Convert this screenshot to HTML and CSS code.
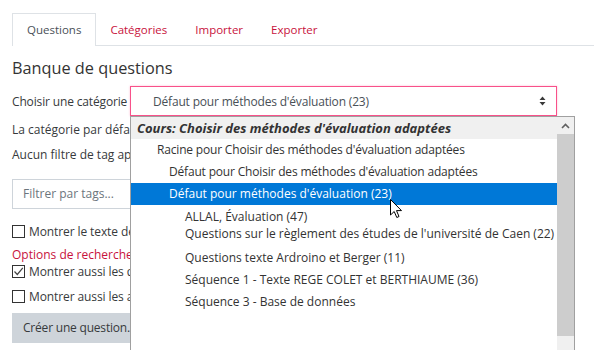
FILE: index.html
```html
<!DOCTYPE html>
<html lang="fr">
<head>
<meta charset="utf-8">
<title>Banque de questions</title>
<link rel="stylesheet" href="styles.css">
</head>
<body>
<div class="page">
  <ul class="tabs">
    <li class="tab active">Questions</li>
    <li class="tab">Catégories</li>
    <li class="tab">Importer</li>
    <li class="tab">Exporter</li>
  </ul>
  <h2 class="title">Banque de questions</h2>
  <div class="cat-row">
    <span class="label">Choisir une catégorie</span>
    <div class="select">
      <span class="sel-text">Défaut pour méthodes d'évaluation (23)</span>
      <svg class="sel-arrow" width="7" height="10" viewBox="0 0 7 10"><path d="M0.5 4 L3.5 0.5 L6.5 4 Z M0.5 6 L3.5 9.5 L6.5 6 Z" fill="#3a3a3a"/></svg>
    </div>
  </div>
  <div class="line l1">La catégorie par défaut pour les questions partagées dans ce contexte.</div>
  <div class="line l2">Aucun filtre de tag appliqué</div>
  <div class="tagfilter">Filtrer par tags...</div>
  <div class="check c1"><span class="box"></span>Montrer le texte de la question dans la liste de questions</div>
  <div class="opts">Options de recherche</div>
  <div class="check c2"><span class="box checked"><svg width="11" height="11" viewBox="0 0 11 11"><path d="M1.5 5.5 L4.3 8.5 L9.8 1.8" fill="none" stroke="#444" stroke-width="1.2"/></svg></span>Montrer aussi les questions des sous-catégories</div>
  <div class="check c3"><span class="box"></span>Montrer aussi les anciennes questions</div>
  <div class="btn">Créer une question...</div>

  <div class="dropdown">
    <div class="list">
      <div class="opt group">Cours: Choisir des méthodes d'évaluation adaptées</div>
      <div class="opt lv1 tight">Racine pour Choisir des méthodes d'évaluation adaptées</div>
      <div class="opt lv2 tight">Défaut pour Choisir des méthodes d'évaluation adaptées</div>
      <div class="opt lv2 selected">Défaut pour méthodes d'évaluation (23)</div>
      <div class="opt lv3 allal">ALLAL, Évaluation (47)</div>
      <div class="opt lv3 qsur">Questions sur le règlement des études de l'université de Caen (22)</div>
      <div class="opt lv3 qtexte">Questions texte Ardroino et Berger (11)</div>
      <div class="opt lv3">Séquence 1 - Texte REGE COLET et BERTHIAUME (36)</div>
      <div class="opt lv3">Séquence 3 - Base de données</div>
    </div>
    <div class="scrollbar">
      <div class="sb-up"><svg width="9" height="6" viewBox="0 0 9 6"><path d="M1 5 L4.5 1.5 L8 5" fill="none" stroke="#606060" stroke-width="1.6"/></svg></div>
      <div class="sb-thumb"></div>
      <div class="sb-track"></div>
    </div>
  </div>

  <svg class="cursor" width="13" height="20" viewBox="0 0 13 20"><path d="M0.5 0.5 L0.5 16 L4.2 12.5 L6.8 18.5 L9 17.5 L6.5 11.6 L11.5 11.6 Z" fill="#fff" stroke="#000" stroke-width="1" stroke-linejoin="round"/></svg>
</div>
</body>
</html>
```

FILE: styles.css
```css
html, body {
  margin: 0;
  padding: 0;
  background: #fff;
}
body {
  font-family: "Open Sans", "Noto Sans", sans-serif;
  font-size: 12px;
  color: #373a3c;
  width: 594px;
  height: 350px;
  overflow: hidden;
}
.page {
  position: relative;
  padding: 13px 0 0 12px;
  height: 337px;
  overflow: hidden;
}
.tabs {
  list-style: none;
  margin: 0;
  padding: 0;
  display: flex;
  border-bottom: 1px solid #dee2e6;
  height: 32px;
}
.tab {
  height: 32px;
  box-sizing: border-box;
  padding: 0 13px;
  border: 1px solid transparent;
  border-bottom: none;
  line-height: 32px;
  font-size: 11.5px;
  color: #c8123c;
}
.tab.active {
  color: #495057;
  border-color: #dee2e6;
  background: #fff;
  height: 33px;
  margin-bottom: -1px;
  padding: 0 14px;
}
.title {
  margin: 9px 0 0;
  font-size: 16.3px;
  font-weight: normal;
  line-height: 27px;
  height: 27px;
  color: #333;
}
.cat-row {
  margin-top: 4px;
  display: flex;
  align-items: center;
  height: 30px;
}
.label {
  width: 118px;
  flex: none;
  white-space: nowrap;
  letter-spacing: -0.15px;
}
.select {
  width: 427px;
  height: 30px;
  box-sizing: border-box;
  border: 1px solid #f8518a;
  box-shadow: 0 0 2px rgba(255, 64, 129, 0.35);
  display: flex;
  align-items: center;
  justify-content: space-between;
  padding: 0 10px 0 22px;
  color: #495057;
}
.sel-text {
  letter-spacing: -0.18px;
}
.sel-arrow {
  display: block;
}
.line {
  height: 20px;
  line-height: 20px;
  white-space: nowrap;
}
.l1 { margin-top: 4px; }
.l2 { margin-top: 5px; }
.tagfilter {
  margin-top: 14px;
  width: 300px;
  height: 30px;
  box-sizing: border-box;
  border: 1px solid #ced4da;
  padding-left: 10px;
  line-height: 28px;
  color: #6c757d;
}
.check {
  display: flex;
  align-items: center;
  white-space: nowrap;
  height: 16px;
  letter-spacing: -0.1px;
}
.c1 { margin-top: 14px; }
.c2 { margin-top: 0; }
.c3 { margin-top: 9px; }
.box {
  width: 13px;
  height: 13px;
  box-sizing: border-box;
  border: 1px solid #333;
  margin-right: 4px;
  flex: none;
  display: flex;
  align-items: center;
  justify-content: center;
}
.box svg { display: block; }
.opts {
  margin-top: 8px;
  height: 16px;
  line-height: 16px;
  color: #c8123c;
}
.btn {
  margin-top: 9px;
  display: inline-block;
  height: 30px;
  line-height: 30px;
  padding: 0 11px;
  background: #ced4da;
  color: #373a3c;
  width: 180px;
  letter-spacing: -0.2px;
}
.dropdown {
  position: absolute;
  left: 130px;
  top: 116px;
  width: 445px;
  height: 260px;
  box-sizing: border-box;
  border: 1px solid #a0a0a0;
  background: #fff;
  display: flex;
}
.list {
  width: 426px;
  flex: none;
  color: #333;
}
.opt {
  height: 22px;
  line-height: 22px;
  white-space: nowrap;
}
.tight {
  letter-spacing: -0.18px;
}
.group {
  background: #f0f0f0;
  font-weight: bold;
  font-style: italic;
  font-size: 13px;
  padding-left: 6px;
}
.lv1 { padding-left: 26px; }
.lv2 { padding-left: 38px; }
.lv3 { padding-left: 54px; }
.selected {
  background: #0078d7;
  color: #fff;
}
.allal { line-height: 24px; }
.qsur { margin-top: -4px; }
.qtexte { margin-top: 2px; }
.scrollbar {
  width: 17px;
  flex: none;
  display: flex;
  flex-direction: column;
  background: #f0f0f0;
}
.sb-up {
  height: 17px;
  display: flex;
  align-items: center;
  justify-content: center;
}
.sb-up svg { display: block; }
.sb-thumb {
  height: 202px;
  background: #cdcdcd;
}
.sb-track {
  flex: 1;
  background: #f0f0f0;
}
.cursor {
  position: absolute;
  left: 390px;
  top: 199px;
}
```
